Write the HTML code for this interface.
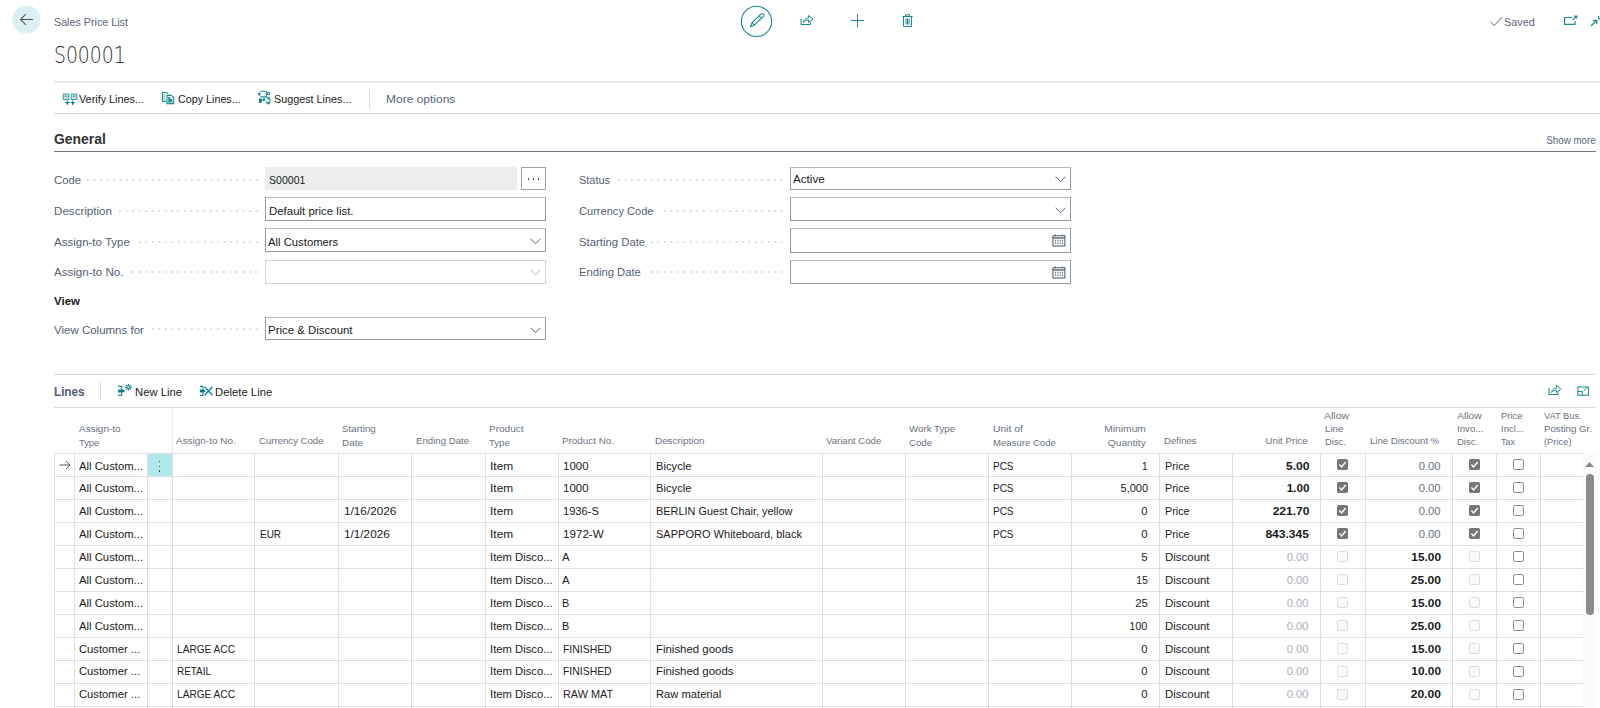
<!DOCTYPE html>
<html lang="en"><head><meta charset="utf-8"><title>S00001 - Sales Price List</title>
<style>
html,body{margin:0;padding:0;background:#fff}
body{position:relative;width:1600px;height:708px;overflow:hidden;font-family:"Liberation Sans",sans-serif}
header,nav,section,main{display:block;margin:0;padding:0}
i,svg,.t{position:absolute;display:block}
.t{white-space:pre;line-height:20px;transform-origin:0 50%}
.t.r{transform-origin:100% 50%}
</style></head><body>
<main>
<header class="page-header">
<svg style="left:12px;top:5px" width="29" height="29" viewBox="0 0 29 29"><circle cx="14.5" cy="14.5" r="14" fill="#dbf0f2"/><path d="M21 14.5H8.6M13.8 9.2L8.5 14.5l5.3 5.3" fill="none" stroke="#555" stroke-width="1.1"/></svg>
<i style="left:54px;top:81px;width:1546px;height:1px;background:#e1e3e6"></i>
<i style="left:54px;top:82px;width:1546px;height:1px;background:#f1f2f4"></i>
<svg style="left:740px;top:5px" width="33" height="33" viewBox="0 0 33 33"><circle cx="16.5" cy="16.4" r="15.1" fill="none" stroke="#178a94" stroke-width="1.1"/><path d="M10.4 21.7L14.3 20.2 23.3 11.6A1.7 1.7 0 0 0 20.9 9.1L12 17.7zM12 17.7L14.3 20.2M19.2 10.8L21.5 13.3" fill="none" stroke="#178a94" stroke-width="1.05" stroke-linejoin="round"/></svg>
<svg style="left:800px;top:14px" width="14" height="12" viewBox="0 0 14 12"><path d="M1 4.5V10.5H10.5V8.5" fill="none" stroke="#178a94" stroke-width="1"/><path d="M3.5 8.5C4 5.5 6 4 8.5 4V1.5L13 5 8.5 8.5V6C6.5 6 4.8 6.8 3.5 8.5z" fill="none" stroke="#178a94" stroke-width="1" stroke-linejoin="round"/></svg>
<svg style="left:851px;top:14px" width="13" height="13" viewBox="0 0 13 13"><path d="M6.5 0V13M0 6.5H13" stroke="#178a94" stroke-width="1"/></svg>
<svg style="left:902px;top:14px" width="11" height="13" viewBox="0 0 11 13"><path d="M0.3 2.5H10.7M3.5 2.5V0.8H7.5V2.5M1.5 2.5V12.4H9.5V2.5M4 4.5V10.5M5.5 4.5V10.5M7 4.5V10.5" fill="none" stroke="#178a94" stroke-width="1"/></svg>
<svg style="left:1490px;top:16px" width="13" height="11" viewBox="0 0 13 11"><path d="M0.5 6L4.2 9.6 12.2 1" fill="none" stroke="#59647a" stroke-width="1"/></svg>
<svg style="left:1564px;top:15px" width="14" height="11" viewBox="0 0 14 11"><path d="M8 2.5H0.6V9.4H11V6" fill="none" stroke="#178a94" stroke-width="1.2"/><path d="M8.5 5L12.5 1M10 1H12.8V3.6" fill="none" stroke="#178a94" stroke-width="1.1"/></svg>
<svg style="left:1590px;top:15px" width="10" height="12" viewBox="0 0 10 12"><path d="M1 11L6.5 5.5M3 5.3H6.7V9" fill="none" stroke="#178a94" stroke-width="1.2"/><path d="M8.7 1V3.8H10" fill="none" stroke="#178a94" stroke-width="1.2"/></svg>
<span class="t" style="left:53.95px;top:12px;font-size:11.6px;color:#59647a;transform:scaleX(0.9252);">Sales Price List</span>
<span class="t" style="left:54.28px;top:45px;font-size:23.4px;color:#333;transform:scaleX(0.8028);font-weight:200;font-family:'DejaVu Sans','Liberation Sans',sans-serif;">S00001</span>
<span class="t" style="left:1503.64px;top:12px;font-size:11.6px;color:#59647a;transform:scaleX(0.9336);">Saved</span>
</header>
<nav class="action-bar">
<svg style="left:62px;top:93px" width="16" height="13" viewBox="0 0 16 13"><g fill="#178a94" fill-opacity=".25" stroke="#178a94" stroke-opacity=".8" stroke-width="1"><rect x="1.3" y="1.1" width="5.6" height="5.4"/><rect x="9.3" y="1.1" width="5.6" height="5.4"/></g><g fill="none" stroke="#178a94" stroke-width="1.1"><path d="M2.8 3.3H5.6M10.8 3.3H13.6" stroke-opacity=".8"/><path d="M5.4 7.6V11.4M10.7 7.6V11.4M3.2 9.5H7.6M8.5 9.5H12.9"/></g><path d="M4 9.6H6.8L5.4 12.2zM9.3 9.6H12.1L10.7 12.2z" fill="#007d88"/></svg>
<svg style="left:161px;top:91px" width="14" height="14" viewBox="0 0 14 14"><g fill="none" stroke="#178a94" stroke-width="1.1"><path d="M5.2 10.4H1.5V1.5H5.6L6.6 2.5"/><path d="M6 4.4H10.3L12.7 6.8V12.6H6z"/></g><path d="M2.6 3H4V9.3H2.6z" fill="#178a94" fill-opacity=".45"/><path d="M7.2 6H9.4V7.9H11.4V11.4H7.2z" fill="#007d88" fill-opacity=".85"/></svg>
<svg style="left:257px;top:90px" width="16" height="16" viewBox="0 0 16 16"><g fill="none" stroke="#178a94" stroke-width="1.1"><path d="M3.4 6.9H9.6V1.8Q9.6 1.3 9 1.3H3.4"/><path d="M1.3 4H4.3M1.2 4L3 2.4M1.2 4L3 5.6"/><circle cx="11.6" cy="3.4" r="1.2"/><path d="M10.2 7.2A3.4 3.4 0 0 1 12.4 12.8M9 11.5A3.4 3.4 0 0 0 10.8 13.6"/></g><path d="M2 8.6H4.8V12.8H2zM5.6 8.6H8.4L7.6 11H5.6z" fill="#007d88"/><path d="M10 12.1l3.2.2-1.3 2.6z" fill="#007d88"/><path d="M11.2 6.6l2.1 2.2-2.9.6z" fill="#007d88"/></svg>
<i style="left:368.5px;top:89px;width:1.4px;height:19px;background:#d3d6dc"></i>
<i style="left:54px;top:113px;width:1546px;height:1px;background:#d7dbe0"></i>
<span class="t" style="left:79.24px;top:89px;font-size:11.6px;color:#212121;transform:scaleX(0.9329);">Verify Lines...</span>
<span class="t" style="left:177.75px;top:89px;font-size:11.6px;color:#212121;transform:scaleX(0.9263);">Copy Lines...</span>
<span class="t" style="left:274.24px;top:89px;font-size:11.6px;color:#212121;transform:scaleX(0.9312);">Suggest Lines...</span>
<span class="t" style="left:386.06px;top:89px;font-size:11.6px;color:#59647a;transform:scaleX(1.0341);">More options</span>
</nav>
<section class="fasttab general">
<i style="left:54px;top:151px;width:1542px;height:1px;background:#6c778a"></i>
<i style="left:86.8px;top:179px;width:172.2px;height:2px;margin-top:-0.3px;background:radial-gradient(circle at 0.9px 1px,#c4c9d2 0.55px,transparent 0.9px) 0 0/6.5px 2px repeat-x"></i>
<i style="left:119.3px;top:209.8px;width:139.7px;height:2px;margin-top:-0.3px;background:radial-gradient(circle at 0.9px 1px,#c4c9d2 0.55px,transparent 0.9px) 0 0/6.5px 2px repeat-x"></i>
<i style="left:138.8px;top:240.8px;width:120.19999999999999px;height:2px;margin-top:-0.3px;background:radial-gradient(circle at 0.9px 1px,#c4c9d2 0.55px,transparent 0.9px) 0 0/6.5px 2px repeat-x"></i>
<i style="left:132.3px;top:271.5px;width:126.69999999999999px;height:2px;margin-top:-0.3px;background:radial-gradient(circle at 0.9px 1px,#c4c9d2 0.55px,transparent 0.9px) 0 0/6.5px 2px repeat-x"></i>
<i style="left:151.8px;top:328.5px;width:107.19999999999999px;height:2px;margin-top:-0.3px;background:radial-gradient(circle at 0.9px 1px,#c4c9d2 0.55px,transparent 0.9px) 0 0/6.5px 2px repeat-x"></i>
<i style="left:265px;top:167px;width:252px;height:23px;background:#ebedef"></i>
<i style="left:521px;top:167px;width:25px;height:23px;box-sizing:border-box;border:1px solid #9da1a9;background:#fff"></i>
<i style="left:528.1px;top:178.4px;width:1.4px;height:1.4px;background:#333;border-radius:1px"></i>
<i style="left:533.1px;top:178.4px;width:1.4px;height:1.4px;background:#333;border-radius:1px"></i>
<i style="left:538.1px;top:178.4px;width:1.4px;height:1.4px;background:#333;border-radius:1px"></i>
<i style="left:265px;top:197px;width:281px;height:24px;box-sizing:border-box;border:1px solid #9199a7;border-top-color:#b4bac5;background:#fff"></i>
<i style="left:265px;top:228px;width:281px;height:24px;box-sizing:border-box;border:1px solid #9199a7;border-top-color:#b4bac5;background:#fff"></i>
<svg style="left:530px;top:238px" width="11" height="7" viewBox="0 0 11 7"><path d="M0.5 0.7L5.5 5.7 10.5 0.7" fill="none" stroke="#59647a" stroke-width="1"/></svg>
<i style="left:265px;top:260px;width:281px;height:24px;box-sizing:border-box;border:1px solid #cfd3da;border-top-color:#cfd3da;background:#fff"></i>
<svg style="left:530px;top:269px" width="11" height="7" viewBox="0 0 11 7"><path d="M0.5 0.7L5.5 5.7 10.5 0.7" fill="none" stroke="#b5bac4" stroke-width="1"/></svg>
<i style="left:265px;top:317px;width:281px;height:23px;box-sizing:border-box;border:1px solid #9199a7;border-top-color:#b4bac5;background:#fff"></i>
<svg style="left:530px;top:326.5px" width="11" height="7" viewBox="0 0 11 7"><path d="M0.5 0.7L5.5 5.7 10.5 0.7" fill="none" stroke="#59647a" stroke-width="1"/></svg>
<i style="left:618px;top:179px;width:165.5px;height:2px;margin-top:-0.3px;background:radial-gradient(circle at 0.9px 1px,#c4c9d2 0.55px,transparent 0.9px) 0 0/6.5px 2px repeat-x"></i>
<i style="left:663.5px;top:209.8px;width:120.0px;height:2px;margin-top:-0.3px;background:radial-gradient(circle at 0.9px 1px,#c4c9d2 0.55px,transparent 0.9px) 0 0/6.5px 2px repeat-x"></i>
<i style="left:650.5px;top:240.8px;width:133.0px;height:2px;margin-top:-0.3px;background:radial-gradient(circle at 0.9px 1px,#c4c9d2 0.55px,transparent 0.9px) 0 0/6.5px 2px repeat-x"></i>
<i style="left:650.5px;top:271.5px;width:133.0px;height:2px;margin-top:-0.3px;background:radial-gradient(circle at 0.9px 1px,#c4c9d2 0.55px,transparent 0.9px) 0 0/6.5px 2px repeat-x"></i>
<i style="left:790px;top:167px;width:281px;height:23px;box-sizing:border-box;border:1px solid #9199a7;border-top-color:#b4bac5;background:#fff"></i>
<svg style="left:1054.5px;top:176px" width="11" height="7" viewBox="0 0 11 7"><path d="M0.5 0.7L5.5 5.7 10.5 0.7" fill="none" stroke="#59647a" stroke-width="1"/></svg>
<i style="left:790px;top:197px;width:281px;height:24px;box-sizing:border-box;border:1px solid #9199a7;border-top-color:#b4bac5;background:#fff"></i>
<svg style="left:1054.5px;top:207px" width="11" height="7" viewBox="0 0 11 7"><path d="M0.5 0.7L5.5 5.7 10.5 0.7" fill="none" stroke="#59647a" stroke-width="1"/></svg>
<i style="left:790px;top:228px;width:281px;height:25px;box-sizing:border-box;border:1px solid #9199a7;border-top-color:#b4bac5;background:#fff"></i>
<svg style="left:1052px;top:234px" width="14" height="13" viewBox="0 0 14 13"><g fill="none" stroke="#4d5566" stroke-width="1"><rect x="0.9" y="1.8" width="12" height="10.2"/><path d="M0.9 4H12.9" stroke-width="1.3"/><path d="M3.4 0.6V2M10.4 0.6V2"/></g><g fill="#5d6678"><rect x="3" y="5.8" width="1.1" height="1.5"/><rect x="5.3" y="5.8" width="1.1" height="1.5"/><rect x="7.6" y="5.8" width="1.1" height="1.5"/><rect x="9.9" y="5.8" width="1.1" height="1.5"/><rect x="3" y="8.4" width="1.1" height="1.5"/><rect x="5.3" y="8.4" width="1.1" height="1.5"/><rect x="7.6" y="8.4" width="1.1" height="1.5"/><rect x="9.9" y="8.4" width="1.1" height="1.5"/></g></svg>
<i style="left:790px;top:260px;width:281px;height:24px;box-sizing:border-box;border:1px solid #9199a7;border-top-color:#b4bac5;background:#fff"></i>
<svg style="left:1052px;top:266px" width="14" height="13" viewBox="0 0 14 13"><g fill="none" stroke="#4d5566" stroke-width="1"><rect x="0.9" y="1.8" width="12" height="10.2"/><path d="M0.9 4H12.9" stroke-width="1.3"/><path d="M3.4 0.6V2M10.4 0.6V2"/></g><g fill="#5d6678"><rect x="3" y="5.8" width="1.1" height="1.5"/><rect x="5.3" y="5.8" width="1.1" height="1.5"/><rect x="7.6" y="5.8" width="1.1" height="1.5"/><rect x="9.9" y="5.8" width="1.1" height="1.5"/><rect x="3" y="8.4" width="1.1" height="1.5"/><rect x="5.3" y="8.4" width="1.1" height="1.5"/><rect x="7.6" y="8.4" width="1.1" height="1.5"/><rect x="9.9" y="8.4" width="1.1" height="1.5"/></g></svg>
<span class="t" style="left:53.78px;top:130px;font-size:13.8px;color:#333;transform:scaleX(1.0076);font-weight:700;">General</span>
<span class="t r" style="right:4.01px;top:131px;font-size:10px;color:#59647a;transform:scaleX(0.9742);">Show more</span>
<span class="t" style="left:53.96px;top:170px;font-size:11.6px;color:#556074;transform:scaleX(0.9776);">Code</span>
<span class="t" style="left:53.94px;top:201px;font-size:11.6px;color:#556074;transform:scaleX(1.0005);">Description</span>
<span class="t" style="left:53.94px;top:232px;font-size:11.6px;color:#556074;transform:scaleX(0.9926);">Assign-to Type</span>
<span class="t" style="left:53.94px;top:262px;font-size:11.6px;color:#556074;transform:scaleX(0.9983);">Assign-to No.</span>
<span class="t" style="left:54.00px;top:291px;font-size:11.6px;color:#212121;transform:scaleX(0.9903);font-weight:700;">View</span>
<span class="t" style="left:53.94px;top:320px;font-size:11.6px;color:#556074;transform:scaleX(0.9914);">View Columns for</span>
<span class="t" style="left:269.01px;top:170px;font-size:11px;color:#212121;transform:scaleX(0.9598);">S00001</span>
<span class="t" style="left:268.95px;top:201px;font-size:11.6px;color:#212121;transform:scaleX(0.9861);">Default price list.</span>
<span class="t" style="left:268.21px;top:232px;font-size:11.6px;color:#212121;transform:scaleX(0.9735);">All Customers</span>
<span class="t" style="left:268.20px;top:320px;font-size:11.6px;color:#212121;transform:scaleX(0.9866);">Price &amp; Discount</span>
<span class="t" style="left:578.63px;top:170px;font-size:11.6px;color:#556074;transform:scaleX(0.9462);">Status</span>
<span class="t" style="left:578.62px;top:201px;font-size:11.6px;color:#556074;transform:scaleX(0.9556);">Currency Code</span>
<span class="t" style="left:578.61px;top:232px;font-size:11.6px;color:#556074;transform:scaleX(0.9775);">Starting Date</span>
<span class="t" style="left:578.61px;top:262px;font-size:11.6px;color:#556074;transform:scaleX(0.9674);">Ending Date</span>
<span class="t" style="left:792.68px;top:169px;font-size:11.6px;color:#212121;transform:scaleX(1.0065);">Active</span>
</section>
<section class="part lines">
<i style="left:54px;top:374px;width:1542px;height:1px;background:#d7dbe0"></i>
<i style="left:100px;top:382px;width:1.3px;height:18px;background:#d9dce1"></i>
<svg style="left:117px;top:383px" width="16" height="14" viewBox="0 0 16 14"><g fill="none" stroke="#178a94" stroke-width="1.1"><path d="M1.2 3.4H4.6V6.4M1.2 12.4H4.6V9.4"/><path d="M11.4 0.9V7.7M8 4.3H14.8M9 1.9L13.8 6.7M13.8 1.9L9 6.7" stroke-width="1.15"/></g><circle cx="11.4" cy="4.3" r="1" fill="#fff"/><path d="M1.2 6.5H6.3L8.1 7.9 6.3 9.4H1.2z" fill="#007d88"/></svg>
<svg style="left:199px;top:383px" width="15" height="14" viewBox="0 0 15 14"><g fill="none" stroke="#178a94" stroke-width="1.1"><path d="M0.8 3.4H3.9V6.4M0.8 12.4H3.9V9.4"/><path d="M5.6 3.7L13.4 12.3M13.4 3.7L5.6 12.3" stroke="#178a94" stroke-width="1.35"/></g><path d="M0.8 6.5H5L6.6 7.9 5 9.4H0.8z" fill="#007d88"/></svg>
<svg style="left:1548px;top:384px" width="14" height="12" viewBox="0 0 14 12"><path d="M1 4V10.5H10V8.8" fill="none" stroke="#178a94" stroke-width="1.1"/><path d="M3.6 8.5C4 5.6 6 4.2 8.4 4.2V1.2L12.8 5 8.4 8.6V6.2C6.4 6.2 4.8 6.9 3.6 8.5z" fill="none" stroke="#178a94" stroke-width="1" stroke-linejoin="round"/></svg>
<svg style="left:1576.5px;top:385.5px" width="13" height="10" viewBox="0 0 13 10"><path d="M0.9 1H11.4V9.2H0.9zM0.9 5.5H5.2V9.2" fill="none" stroke="#178a94" stroke-width="1.05"/><path d="M6.6 4.7L10.6 1.2" fill="none" stroke="#178a94" stroke-width="1"/></svg>
<i style="left:54px;top:407px;width:1542px;height:1px;background:#d7dbe0"></i>
<i style="left:148px;top:454px;width:24px;height:22px;background:#b0e8ec"></i>
<i style="left:54px;top:453px;width:1529px;height:1px;background:#dcdfe4"></i>
<i style="left:54px;top:476px;width:1529px;height:1px;background:#dcdfe4"></i>
<i style="left:54px;top:499px;width:1529px;height:1px;background:#dcdfe4"></i>
<i style="left:54px;top:522px;width:1529px;height:1px;background:#dcdfe4"></i>
<i style="left:54px;top:545px;width:1529px;height:1px;background:#dcdfe4"></i>
<i style="left:54px;top:568px;width:1529px;height:1px;background:#dcdfe4"></i>
<i style="left:54px;top:591px;width:1529px;height:1px;background:#dcdfe4"></i>
<i style="left:54px;top:614px;width:1529px;height:1px;background:#dcdfe4"></i>
<i style="left:54px;top:637px;width:1529px;height:1px;background:#dcdfe4"></i>
<i style="left:54px;top:660px;width:1529px;height:1px;background:#dcdfe4"></i>
<i style="left:54px;top:683px;width:1529px;height:1px;background:#dcdfe4"></i>
<i style="left:54px;top:706px;width:1529px;height:1px;background:#dcdfe4"></i>
<i style="left:172px;top:408px;width:1px;height:45px;background:#ececf0"></i>
<i style="left:54px;top:453px;width:1px;height:255px;background:#dcdfe4"></i>
<i style="left:74px;top:453px;width:1px;height:255px;background:#dcdfe4"></i>
<i style="left:147px;top:453px;width:1px;height:255px;background:#dcdfe4"></i>
<i style="left:172px;top:453px;width:1px;height:255px;background:#dcdfe4"></i>
<i style="left:254px;top:453px;width:1px;height:255px;background:#dcdfe4"></i>
<i style="left:338px;top:453px;width:1px;height:255px;background:#dcdfe4"></i>
<i style="left:411px;top:453px;width:1px;height:255px;background:#dcdfe4"></i>
<i style="left:485px;top:453px;width:1px;height:255px;background:#dcdfe4"></i>
<i style="left:558px;top:453px;width:1px;height:255px;background:#dcdfe4"></i>
<i style="left:650.3px;top:453px;width:1px;height:255px;background:#dcdfe4"></i>
<i style="left:822px;top:453px;width:1px;height:255px;background:#dcdfe4"></i>
<i style="left:905px;top:453px;width:1px;height:255px;background:#dcdfe4"></i>
<i style="left:987.5px;top:453px;width:1px;height:255px;background:#dcdfe4"></i>
<i style="left:1071px;top:453px;width:1px;height:255px;background:#dcdfe4"></i>
<i style="left:1159px;top:453px;width:1px;height:255px;background:#dcdfe4"></i>
<i style="left:1232px;top:453px;width:1px;height:255px;background:#dcdfe4"></i>
<i style="left:1320px;top:453px;width:1px;height:255px;background:#dcdfe4"></i>
<i style="left:1364.5px;top:453px;width:1px;height:255px;background:#dcdfe4"></i>
<i style="left:1452px;top:453px;width:1px;height:255px;background:#dcdfe4"></i>
<i style="left:1496px;top:453px;width:1px;height:255px;background:#dcdfe4"></i>
<i style="left:1540px;top:453px;width:1px;height:255px;background:#dcdfe4"></i>
<svg style="left:59px;top:460px" width="12" height="10" viewBox="0 0 12 10"><path d="M0.5 5H11M7 1L11 5 7 9" fill="none" stroke="#555" stroke-width="1"/></svg>
<i style="left:158.6px;top:460.7px;width:1.6px;height:1.6px;background:#2a2a2a;border-radius:1px"></i>
<i style="left:158.6px;top:465.7px;width:1.6px;height:1.6px;background:#2a2a2a;border-radius:1px"></i>
<i style="left:158.6px;top:470.3px;width:1.6px;height:1.6px;background:#2a2a2a;border-radius:1px"></i>
<svg style="left:1337.0px;top:459px" width="11" height="11" viewBox="0 0 11 11"><rect width="11" height="11" rx="1.8" fill="#767676"/><path d="M2.4 5.6L4.6 7.9 8.7 3" fill="none" stroke="#fff" stroke-width="1.4"/></svg>
<svg style="left:1469.0px;top:459px" width="11" height="11" viewBox="0 0 11 11"><rect width="11" height="11" rx="1.8" fill="#767676"/><path d="M2.4 5.6L4.6 7.9 8.7 3" fill="none" stroke="#fff" stroke-width="1.4"/></svg>
<i style="left:1512.8px;top:459px;width:11px;height:11px;box-sizing:border-box;border:1px solid #8b8b8b;border-radius:2.2px;background:#fff"></i>
<svg style="left:1337.0px;top:482px" width="11" height="11" viewBox="0 0 11 11"><rect width="11" height="11" rx="1.8" fill="#767676"/><path d="M2.4 5.6L4.6 7.9 8.7 3" fill="none" stroke="#fff" stroke-width="1.4"/></svg>
<svg style="left:1469.0px;top:482px" width="11" height="11" viewBox="0 0 11 11"><rect width="11" height="11" rx="1.8" fill="#767676"/><path d="M2.4 5.6L4.6 7.9 8.7 3" fill="none" stroke="#fff" stroke-width="1.4"/></svg>
<i style="left:1512.8px;top:482px;width:11px;height:11px;box-sizing:border-box;border:1px solid #8b8b8b;border-radius:2.2px;background:#fff"></i>
<svg style="left:1337.0px;top:505px" width="11" height="11" viewBox="0 0 11 11"><rect width="11" height="11" rx="1.8" fill="#767676"/><path d="M2.4 5.6L4.6 7.9 8.7 3" fill="none" stroke="#fff" stroke-width="1.4"/></svg>
<svg style="left:1469.0px;top:505px" width="11" height="11" viewBox="0 0 11 11"><rect width="11" height="11" rx="1.8" fill="#767676"/><path d="M2.4 5.6L4.6 7.9 8.7 3" fill="none" stroke="#fff" stroke-width="1.4"/></svg>
<i style="left:1512.8px;top:505px;width:11px;height:11px;box-sizing:border-box;border:1px solid #8b8b8b;border-radius:2.2px;background:#fff"></i>
<svg style="left:1337.0px;top:528px" width="11" height="11" viewBox="0 0 11 11"><rect width="11" height="11" rx="1.8" fill="#767676"/><path d="M2.4 5.6L4.6 7.9 8.7 3" fill="none" stroke="#fff" stroke-width="1.4"/></svg>
<svg style="left:1469.0px;top:528px" width="11" height="11" viewBox="0 0 11 11"><rect width="11" height="11" rx="1.8" fill="#767676"/><path d="M2.4 5.6L4.6 7.9 8.7 3" fill="none" stroke="#fff" stroke-width="1.4"/></svg>
<i style="left:1512.8px;top:528px;width:11px;height:11px;box-sizing:border-box;border:1px solid #8b8b8b;border-radius:2.2px;background:#fff"></i>
<i style="left:1337.0px;top:551px;width:11px;height:11px;box-sizing:border-box;border:1px solid #dcdcdc;border-radius:2.2px;background:#fafafa"></i>
<i style="left:1469.0px;top:551px;width:11px;height:11px;box-sizing:border-box;border:1px solid #dcdcdc;border-radius:2.2px;background:#fafafa"></i>
<i style="left:1512.8px;top:551px;width:11px;height:11px;box-sizing:border-box;border:1px solid #8b8b8b;border-radius:2.2px;background:#fff"></i>
<i style="left:1337.0px;top:574px;width:11px;height:11px;box-sizing:border-box;border:1px solid #dcdcdc;border-radius:2.2px;background:#fafafa"></i>
<i style="left:1469.0px;top:574px;width:11px;height:11px;box-sizing:border-box;border:1px solid #dcdcdc;border-radius:2.2px;background:#fafafa"></i>
<i style="left:1512.8px;top:574px;width:11px;height:11px;box-sizing:border-box;border:1px solid #8b8b8b;border-radius:2.2px;background:#fff"></i>
<i style="left:1337.0px;top:597px;width:11px;height:11px;box-sizing:border-box;border:1px solid #dcdcdc;border-radius:2.2px;background:#fafafa"></i>
<i style="left:1469.0px;top:597px;width:11px;height:11px;box-sizing:border-box;border:1px solid #dcdcdc;border-radius:2.2px;background:#fafafa"></i>
<i style="left:1512.8px;top:597px;width:11px;height:11px;box-sizing:border-box;border:1px solid #8b8b8b;border-radius:2.2px;background:#fff"></i>
<i style="left:1337.0px;top:620px;width:11px;height:11px;box-sizing:border-box;border:1px solid #dcdcdc;border-radius:2.2px;background:#fafafa"></i>
<i style="left:1469.0px;top:620px;width:11px;height:11px;box-sizing:border-box;border:1px solid #dcdcdc;border-radius:2.2px;background:#fafafa"></i>
<i style="left:1512.8px;top:620px;width:11px;height:11px;box-sizing:border-box;border:1px solid #8b8b8b;border-radius:2.2px;background:#fff"></i>
<i style="left:1337.0px;top:643px;width:11px;height:11px;box-sizing:border-box;border:1px solid #dcdcdc;border-radius:2.2px;background:#fafafa"></i>
<i style="left:1469.0px;top:643px;width:11px;height:11px;box-sizing:border-box;border:1px solid #dcdcdc;border-radius:2.2px;background:#fafafa"></i>
<i style="left:1512.8px;top:643px;width:11px;height:11px;box-sizing:border-box;border:1px solid #8b8b8b;border-radius:2.2px;background:#fff"></i>
<i style="left:1337.0px;top:666px;width:11px;height:11px;box-sizing:border-box;border:1px solid #dcdcdc;border-radius:2.2px;background:#fafafa"></i>
<i style="left:1469.0px;top:666px;width:11px;height:11px;box-sizing:border-box;border:1px solid #dcdcdc;border-radius:2.2px;background:#fafafa"></i>
<i style="left:1512.8px;top:666px;width:11px;height:11px;box-sizing:border-box;border:1px solid #8b8b8b;border-radius:2.2px;background:#fff"></i>
<i style="left:1337.0px;top:689px;width:11px;height:11px;box-sizing:border-box;border:1px solid #dcdcdc;border-radius:2.2px;background:#fafafa"></i>
<i style="left:1469.0px;top:689px;width:11px;height:11px;box-sizing:border-box;border:1px solid #dcdcdc;border-radius:2.2px;background:#fafafa"></i>
<i style="left:1512.8px;top:689px;width:11px;height:11px;box-sizing:border-box;border:1px solid #8b8b8b;border-radius:2.2px;background:#fff"></i>
<i style="left:1583px;top:453px;width:13px;height:255px;background:#fafafa"></i>
<svg style="left:1585px;top:462px" width="9" height="5" viewBox="0 0 9 5"><path d="M0 5L4.5 0 9 5z" fill="#8b8b8b"/></svg>
<i style="left:1585.5px;top:474px;width:8px;height:141px;background:#8b8b8b;border-radius:4px"></i>
<span class="t" style="left:53.98px;top:382px;font-size:12.6px;color:#505c6e;transform:scaleX(0.9264);font-weight:700;">Lines</span>
<span class="t" style="left:134.81px;top:382px;font-size:11.6px;color:#212121;transform:scaleX(0.9731);">New Line</span>
<span class="t" style="left:215.46px;top:382px;font-size:11.6px;color:#212121;transform:scaleX(0.9759);">Delete Line</span>
<span class="t" style="left:78.60px;top:419px;font-size:9.6px;color:#6b7280;transform:scaleX(1.0400);">Assign-to</span>
<span class="t" style="left:78.65px;top:433px;font-size:9.6px;color:#6b7280;transform:scaleX(0.9744);">Type</span>
<span class="t" style="left:176.00px;top:431px;font-size:9.6px;color:#6b7280;transform:scaleX(1.0365);">Assign-to No.</span>
<span class="t" style="left:258.93px;top:431px;font-size:9.6px;color:#6b7280;transform:scaleX(1.0004);">Currency Code</span>
<span class="t" style="left:342.31px;top:419px;font-size:9.6px;color:#6b7280;transform:scaleX(1.0227);">Starting</span>
<span class="t" style="left:342.30px;top:433px;font-size:9.6px;color:#6b7280;transform:scaleX(1.0411);">Date</span>
<span class="t" style="left:415.57px;top:431px;font-size:9.6px;color:#6b7280;transform:scaleX(1.0047);">Ending Date</span>
<span class="t" style="left:488.80px;top:419px;font-size:9.6px;color:#6b7280;transform:scaleX(1.0462);">Product</span>
<span class="t" style="left:488.83px;top:433px;font-size:9.6px;color:#6b7280;transform:scaleX(0.9997);">Type</span>
<span class="t" style="left:562.31px;top:431px;font-size:9.6px;color:#6b7280;transform:scaleX(1.0279);">Product No.</span>
<span class="t" style="left:655.06px;top:431px;font-size:9.6px;color:#6b7280;transform:scaleX(1.0289);">Description</span>
<span class="t" style="left:826.33px;top:431px;font-size:9.6px;color:#6b7280;transform:scaleX(1.0002);">Variant Code</span>
<span class="t" style="left:909.32px;top:419px;font-size:9.6px;color:#6b7280;transform:scaleX(1.0125);">Work Type</span>
<span class="t" style="left:909.32px;top:433px;font-size:9.6px;color:#6b7280;transform:scaleX(1.0054);">Code</span>
<span class="t" style="left:992.53px;top:419px;font-size:9.6px;color:#6b7280;transform:scaleX(1.0777);">Unit of</span>
<span class="t" style="left:992.58px;top:433px;font-size:9.6px;color:#6b7280;transform:scaleX(0.9987);">Measure Code</span>
<span class="t r" style="right:454.09px;top:419px;font-size:9.6px;color:#6b7280;transform:scaleX(1.0696);">Minimum</span>
<span class="t r" style="right:454.09px;top:433px;font-size:9.6px;color:#6b7280;transform:scaleX(1.0597);">Quantity</span>
<span class="t" style="left:1163.73px;top:431px;font-size:9.6px;color:#6b7280;transform:scaleX(1.0040);">Defines</span>
<span class="t r" style="right:292.61px;top:431px;font-size:9.6px;color:#6b7280;transform:scaleX(1.0114);">Unit Price</span>
<span class="t" style="left:1324.47px;top:406px;font-size:9.6px;color:#6b7280;transform:scaleX(1.0922);">Allow</span>
<span class="t" style="left:1324.52px;top:419px;font-size:9.6px;color:#6b7280;transform:scaleX(1.0185);">Line</span>
<span class="t" style="left:1324.54px;top:432px;font-size:9.6px;color:#6b7280;transform:scaleX(0.9816);">Disc.</span>
<span class="t r" style="right:160.82px;top:431px;font-size:9.6px;color:#6b7280;transform:scaleX(1.0004);">Line Discount %</span>
<span class="t" style="left:1456.57px;top:406px;font-size:9.6px;color:#6b7280;transform:scaleX(1.0831);">Allow</span>
<span class="t" style="left:1456.62px;top:419px;font-size:9.6px;color:#6b7280;transform:scaleX(1.0126);">Invo...</span>
<span class="t" style="left:1456.64px;top:432px;font-size:9.6px;color:#6b7280;transform:scaleX(0.9866);">Disc.</span>
<span class="t" style="left:1500.73px;top:406px;font-size:9.6px;color:#6b7280;transform:scaleX(0.9902);">Price</span>
<span class="t" style="left:1500.73px;top:419px;font-size:9.6px;color:#6b7280;transform:scaleX(1.0008);">Incl...</span>
<span class="t" style="left:1500.78px;top:432px;font-size:9.6px;color:#6b7280;transform:scaleX(0.9261);">Tax</span>
<span class="t" style="left:1544.35px;top:406px;font-size:9.6px;color:#6b7280;transform:scaleX(0.9662);">VAT Bus.</span>
<span class="t" style="left:1544.32px;top:419px;font-size:9.6px;color:#6b7280;transform:scaleX(1.0105);">Posting Gr.</span>
<span class="t" style="left:1544.35px;top:432px;font-size:9.6px;color:#6b7280;transform:scaleX(0.9745);">(Price)</span>
<span class="t" style="left:78.91px;top:456px;font-size:11.6px;color:#212121;transform:scaleX(0.9745);">All Custom...</span>
<span class="t" style="left:490.06px;top:456px;font-size:11.6px;color:#212121;transform:scaleX(1.0288);">Item</span>
<span class="t" style="left:563.00px;top:456px;font-size:11.6px;color:#212121;transform:scaleX(0.9890);">1000</span>
<span class="t" style="left:655.62px;top:456px;font-size:11.6px;color:#212121;transform:scaleX(0.9659);">Bicycle</span>
<span class="t" style="left:993.05px;top:456px;font-size:11.6px;color:#212121;transform:scaleX(0.8600);">PCS</span>
<span class="t r" style="right:452.30px;top:456px;font-size:11.6px;color:#212121;transform:scaleX(0.8600);">1</span>
<span class="t" style="left:1164.84px;top:456px;font-size:11.6px;color:#212121;transform:scaleX(0.9306);">Price</span>
<span class="t r" style="right:290.91px;top:456px;font-size:11.6px;color:#1a1a1a;transform:scaleX(1.0468);font-weight:700;">5.00</span>
<span class="t r" style="right:158.95px;top:456px;font-size:11.6px;color:#6b7280;transform:scaleX(0.9717);">0.00</span>
<span class="t" style="left:78.91px;top:478px;font-size:11.6px;color:#212121;transform:scaleX(0.9745);">All Custom...</span>
<span class="t" style="left:490.06px;top:478px;font-size:11.6px;color:#212121;transform:scaleX(1.0288);">Item</span>
<span class="t" style="left:563.00px;top:478px;font-size:11.6px;color:#212121;transform:scaleX(0.9890);">1000</span>
<span class="t" style="left:655.62px;top:478px;font-size:11.6px;color:#212121;transform:scaleX(0.9659);">Bicycle</span>
<span class="t" style="left:993.05px;top:478px;font-size:11.6px;color:#212121;transform:scaleX(0.8600);">PCS</span>
<span class="t r" style="right:452.26px;top:478px;font-size:11.6px;color:#212121;transform:scaleX(0.9463);">5,000</span>
<span class="t" style="left:1164.84px;top:478px;font-size:11.6px;color:#212121;transform:scaleX(0.9306);">Price</span>
<span class="t r" style="right:290.93px;top:478px;font-size:11.6px;color:#1a1a1a;transform:scaleX(1.0093);font-weight:700;">1.00</span>
<span class="t r" style="right:158.95px;top:478px;font-size:11.6px;color:#6b7280;transform:scaleX(0.9717);">0.00</span>
<span class="t" style="left:78.91px;top:501px;font-size:11.6px;color:#212121;transform:scaleX(0.9745);">All Custom...</span>
<span class="t" style="left:343.68px;top:501px;font-size:11.6px;color:#212121;transform:scaleX(1.0159);">1/16/2026</span>
<span class="t" style="left:490.06px;top:501px;font-size:11.6px;color:#212121;transform:scaleX(1.0288);">Item</span>
<span class="t" style="left:563.02px;top:501px;font-size:11.6px;color:#212121;transform:scaleX(0.9581);">1936-S</span>
<span class="t" style="left:655.64px;top:501px;font-size:11.6px;color:#212121;transform:scaleX(0.9408);">BERLIN Guest Chair, yellow</span>
<span class="t" style="left:993.05px;top:501px;font-size:11.6px;color:#212121;transform:scaleX(0.8600);">PCS</span>
<span class="t r" style="right:452.25px;top:501px;font-size:11.6px;color:#212121;transform:scaleX(0.9800);">0</span>
<span class="t" style="left:1164.84px;top:501px;font-size:11.6px;color:#212121;transform:scaleX(0.9306);">Price</span>
<span class="t r" style="right:290.92px;top:501px;font-size:11.6px;color:#1a1a1a;transform:scaleX(1.0382);font-weight:700;">221.70</span>
<span class="t r" style="right:158.95px;top:501px;font-size:11.6px;color:#6b7280;transform:scaleX(0.9717);">0.00</span>
<span class="t" style="left:78.91px;top:524px;font-size:11.6px;color:#212121;transform:scaleX(0.9745);">All Custom...</span>
<span class="t" style="left:260.20px;top:524px;font-size:11.6px;color:#212121;transform:scaleX(0.8600);">EUR</span>
<span class="t" style="left:343.68px;top:524px;font-size:11.6px;color:#212121;transform:scaleX(1.0145);">1/1/2026</span>
<span class="t" style="left:490.06px;top:524px;font-size:11.6px;color:#212121;transform:scaleX(1.0288);">Item</span>
<span class="t" style="left:562.99px;top:524px;font-size:11.6px;color:#212121;transform:scaleX(1.0017);">1972-W</span>
<span class="t" style="left:655.63px;top:524px;font-size:11.6px;color:#212121;transform:scaleX(0.9515);">SAPPORO Whiteboard, black</span>
<span class="t" style="left:993.05px;top:524px;font-size:11.6px;color:#212121;transform:scaleX(0.8600);">PCS</span>
<span class="t r" style="right:452.25px;top:524px;font-size:11.6px;color:#212121;transform:scaleX(0.9800);">0</span>
<span class="t" style="left:1164.84px;top:524px;font-size:11.6px;color:#212121;transform:scaleX(0.9306);">Price</span>
<span class="t r" style="right:290.92px;top:524px;font-size:11.6px;color:#1a1a1a;transform:scaleX(1.0382);font-weight:700;">843.345</span>
<span class="t r" style="right:158.95px;top:524px;font-size:11.6px;color:#6b7280;transform:scaleX(0.9717);">0.00</span>
<span class="t" style="left:78.91px;top:547px;font-size:11.6px;color:#212121;transform:scaleX(0.9745);">All Custom...</span>
<span class="t" style="left:490.11px;top:547px;font-size:11.6px;color:#212121;transform:scaleX(0.9705);">Item Disco...</span>
<span class="t" style="left:562.30px;top:547px;font-size:11.6px;color:#212121;transform:scaleX(0.9800);">A</span>
<span class="t r" style="right:452.25px;top:547px;font-size:11.6px;color:#212121;transform:scaleX(0.9800);">5</span>
<span class="t" style="left:1164.80px;top:547px;font-size:11.6px;color:#212121;transform:scaleX(0.9878);">Discount</span>
<span class="t r" style="right:290.95px;top:547px;font-size:11.6px;color:#aab0bb;transform:scaleX(0.9717);">0.00</span>
<span class="t r" style="right:158.92px;top:547px;font-size:11.6px;color:#1a1a1a;transform:scaleX(1.0238);font-weight:700;">15.00</span>
<span class="t" style="left:78.91px;top:570px;font-size:11.6px;color:#212121;transform:scaleX(0.9745);">All Custom...</span>
<span class="t" style="left:490.11px;top:570px;font-size:11.6px;color:#212121;transform:scaleX(0.9705);">Item Disco...</span>
<span class="t" style="left:562.30px;top:570px;font-size:11.6px;color:#212121;transform:scaleX(0.9800);">A</span>
<span class="t r" style="right:452.28px;top:570px;font-size:11.6px;color:#212121;transform:scaleX(0.9009);">15</span>
<span class="t" style="left:1164.80px;top:570px;font-size:11.6px;color:#212121;transform:scaleX(0.9878);">Discount</span>
<span class="t r" style="right:290.95px;top:570px;font-size:11.6px;color:#aab0bb;transform:scaleX(0.9717);">0.00</span>
<span class="t r" style="right:158.92px;top:570px;font-size:11.6px;color:#1a1a1a;transform:scaleX(1.0418);font-weight:700;">25.00</span>
<span class="t" style="left:78.91px;top:593px;font-size:11.6px;color:#212121;transform:scaleX(0.9745);">All Custom...</span>
<span class="t" style="left:490.11px;top:593px;font-size:11.6px;color:#212121;transform:scaleX(0.9705);">Item Disco...</span>
<span class="t" style="left:562.34px;top:593px;font-size:11.6px;color:#212121;transform:scaleX(0.9377);">B</span>
<span class="t r" style="right:452.25px;top:593px;font-size:11.6px;color:#212121;transform:scaleX(0.9800);">25</span>
<span class="t" style="left:1164.80px;top:593px;font-size:11.6px;color:#212121;transform:scaleX(0.9878);">Discount</span>
<span class="t r" style="right:290.95px;top:593px;font-size:11.6px;color:#aab0bb;transform:scaleX(0.9717);">0.00</span>
<span class="t r" style="right:158.92px;top:593px;font-size:11.6px;color:#1a1a1a;transform:scaleX(1.0238);font-weight:700;">15.00</span>
<span class="t" style="left:78.91px;top:616px;font-size:11.6px;color:#212121;transform:scaleX(0.9745);">All Custom...</span>
<span class="t" style="left:490.11px;top:616px;font-size:11.6px;color:#212121;transform:scaleX(0.9705);">Item Disco...</span>
<span class="t" style="left:562.34px;top:616px;font-size:11.6px;color:#212121;transform:scaleX(0.9377);">B</span>
<span class="t r" style="right:452.26px;top:616px;font-size:11.6px;color:#212121;transform:scaleX(0.9385);">100</span>
<span class="t" style="left:1164.80px;top:616px;font-size:11.6px;color:#212121;transform:scaleX(0.9878);">Discount</span>
<span class="t r" style="right:290.95px;top:616px;font-size:11.6px;color:#aab0bb;transform:scaleX(0.9717);">0.00</span>
<span class="t r" style="right:158.92px;top:616px;font-size:11.6px;color:#1a1a1a;transform:scaleX(1.0418);font-weight:700;">25.00</span>
<span class="t" style="left:78.91px;top:639px;font-size:11.6px;color:#212121;transform:scaleX(0.9699);">Customer ...</span>
<span class="t" style="left:177.09px;top:639px;font-size:11.6px;color:#212121;transform:scaleX(0.8741);">LARGE ACC</span>
<span class="t" style="left:490.11px;top:639px;font-size:11.6px;color:#212121;transform:scaleX(0.9705);">Item Disco...</span>
<span class="t" style="left:563.07px;top:639px;font-size:11.6px;color:#212121;transform:scaleX(0.8991);">FINISHED</span>
<span class="t" style="left:655.60px;top:639px;font-size:11.6px;color:#212121;transform:scaleX(0.9849);">Finished goods</span>
<span class="t r" style="right:452.25px;top:639px;font-size:11.6px;color:#212121;transform:scaleX(0.9800);">0</span>
<span class="t" style="left:1164.80px;top:639px;font-size:11.6px;color:#212121;transform:scaleX(0.9878);">Discount</span>
<span class="t r" style="right:290.95px;top:639px;font-size:11.6px;color:#aab0bb;transform:scaleX(0.9717);">0.00</span>
<span class="t r" style="right:158.92px;top:639px;font-size:11.6px;color:#1a1a1a;transform:scaleX(1.0238);font-weight:700;">15.00</span>
<span class="t" style="left:78.91px;top:661px;font-size:11.6px;color:#212121;transform:scaleX(0.9699);">Customer ...</span>
<span class="t" style="left:177.11px;top:661px;font-size:11.6px;color:#212121;transform:scaleX(0.8555);">RETAIL</span>
<span class="t" style="left:490.11px;top:661px;font-size:11.6px;color:#212121;transform:scaleX(0.9705);">Item Disco...</span>
<span class="t" style="left:563.07px;top:661px;font-size:11.6px;color:#212121;transform:scaleX(0.8991);">FINISHED</span>
<span class="t" style="left:655.60px;top:661px;font-size:11.6px;color:#212121;transform:scaleX(0.9849);">Finished goods</span>
<span class="t r" style="right:452.25px;top:661px;font-size:11.6px;color:#212121;transform:scaleX(0.9800);">0</span>
<span class="t" style="left:1164.80px;top:661px;font-size:11.6px;color:#212121;transform:scaleX(0.9878);">Discount</span>
<span class="t r" style="right:290.95px;top:661px;font-size:11.6px;color:#aab0bb;transform:scaleX(0.9717);">0.00</span>
<span class="t r" style="right:158.92px;top:661px;font-size:11.6px;color:#1a1a1a;transform:scaleX(1.0238);font-weight:700;">10.00</span>
<span class="t" style="left:78.91px;top:684px;font-size:11.6px;color:#212121;transform:scaleX(0.9699);">Customer ...</span>
<span class="t" style="left:177.09px;top:684px;font-size:11.6px;color:#212121;transform:scaleX(0.8741);">LARGE ACC</span>
<span class="t" style="left:490.11px;top:684px;font-size:11.6px;color:#212121;transform:scaleX(0.9705);">Item Disco...</span>
<span class="t" style="left:563.04px;top:684px;font-size:11.6px;color:#212121;transform:scaleX(0.9391);">RAW MAT</span>
<span class="t" style="left:655.62px;top:684px;font-size:11.6px;color:#212121;transform:scaleX(0.9656);">Raw material</span>
<span class="t r" style="right:452.25px;top:684px;font-size:11.6px;color:#212121;transform:scaleX(0.9800);">0</span>
<span class="t" style="left:1164.80px;top:684px;font-size:11.6px;color:#212121;transform:scaleX(0.9878);">Discount</span>
<span class="t r" style="right:290.95px;top:684px;font-size:11.6px;color:#aab0bb;transform:scaleX(0.9717);">0.00</span>
<span class="t r" style="right:158.92px;top:684px;font-size:11.6px;color:#1a1a1a;transform:scaleX(1.0418);font-weight:700;">20.00</span>
</section>
</main>
</body></html>
